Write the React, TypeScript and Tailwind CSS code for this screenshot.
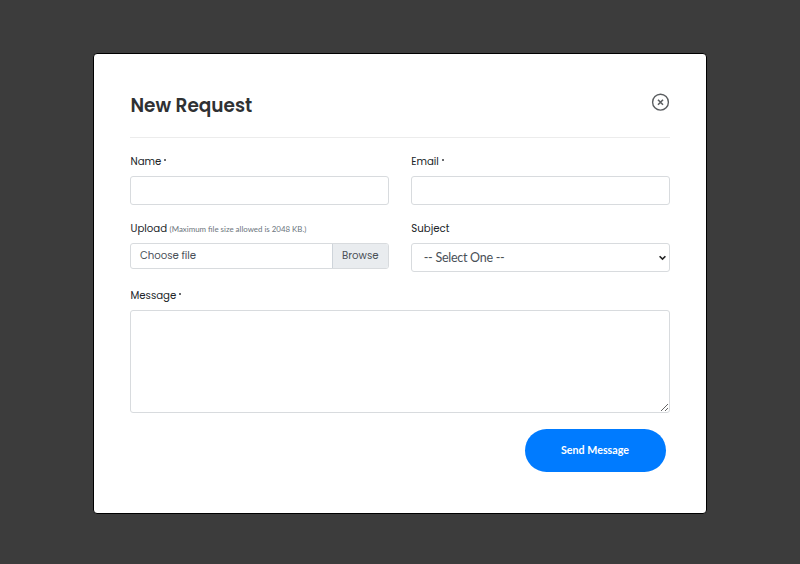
import React from "react";

const label = "block h-[18px] whitespace-nowrap pl-[0.5px] pt-px font-['Poppins','Inter',sans-serif] text-[10.2px] leading-[18px] text-[#212529]";
const box = "block w-full rounded-[3px] border border-[#d8dbde] bg-white";

function Required() {
  return <span className="ml-[3px] inline-block size-[2px] rounded-full bg-[#3a3d40] align-[4px]" />;
}

export default function App() {
  return (
    <div className="flex h-[564px] w-[800px] flex-col overflow-hidden bg-[#3c3c3c] pl-[93px] pt-[53px]">
      <main className="h-[461px] w-[614px] rounded-[4px] border border-black bg-white pl-[36px] pr-[36.5px] font-['Lato',sans-serif]">
        <header className="flex h-[84px] items-start justify-between border-b border-[#ececec]">
          <h1 className="mt-[38px] whitespace-nowrap pl-[0.5px] font-['Poppins','Inter',sans-serif] text-[18.5px] font-semibold leading-[28px] text-[#2f3133]">New Request</h1>
          <button aria-label="Close" className="mt-[39px]">
            <svg width="19" height="19" viewBox="0 0 19 19" fill="none" stroke="#5b5e61">
              <circle cx="9.5" cy="9.2" r="7.9" strokeWidth="1.4" />
              <path d="m7 6.7 5 5m0-5-5 5" strokeWidth="1.6" />
            </svg>
          </button>
        </header>
        <form onSubmit={(e) => e.preventDefault()}>
          <div className="grid grid-cols-2 gap-x-[22px] pt-[14px]">
            <div className="h-[67px]">
              <label htmlFor="name" className={label}><span>Name</span><Required /></label>
              <input id="name" className={`${box} mt-[6px] h-[29px]`} />
            </div>
            <div className="h-[67px]">
              <label htmlFor="email" className={label}><span>Email</span><Required /></label>
              <input id="email" className={`${box} mt-[6px] h-[29px]`} />
            </div>
            <div className="h-[67px]">
              <div className={label}>
                <span>Upload</span>
                <span className="ml-[2.5px] font-['Lato',sans-serif] text-[7.9px] text-[#6c757d]">(Maximum file size allowed is 2048 KB.)</span>
              </div>
              <div className={`${box} mt-[6px] flex h-[26px] overflow-hidden font-['Poppins','Inter',sans-serif] text-[10.2px] leading-[24px] text-[#495057]`}>
                <span className="flex-1 pl-[9px] tracking-[-0.05px]">Choose file</span>
                <span className="w-[56px] border-l border-[#ced4da] bg-[#e9ecef] text-center">Browse</span>
              </div>
            </div>
            <div className="h-[67px]">
              <label htmlFor="subject" className={label}>Subject</label>
              <button id="subject" type="button" className={`${box} mt-[6px] flex h-[29px] items-center justify-between pl-[12px] pr-[3px] text-[12.5px] text-[#495057]`}>
                <span className="pt-px tracking-[-0.27px]">-- Select One --</span>
                <svg width="7" height="6" viewBox="0 0 7 6" fill="none" stroke="#222" strokeWidth="1.6"><path d="m.6 1.2 2.9 2.9 2.9-2.9" /></svg>
              </button>
            </div>
          </div>
          <label htmlFor="message" className={label}><span>Message</span><Required /></label>
          <textarea id="message" className={`${box} mt-[6px] h-[103px] resize`} />
          <div className="flex justify-end pr-[4px] pt-[16px]">
            <button className="h-[43px] w-[141px] rounded-full bg-[#007bff] text-[10.7px] font-bold text-white">Send Message</button>
          </div>
        </form>
      </main>
    </div>
  );
}
